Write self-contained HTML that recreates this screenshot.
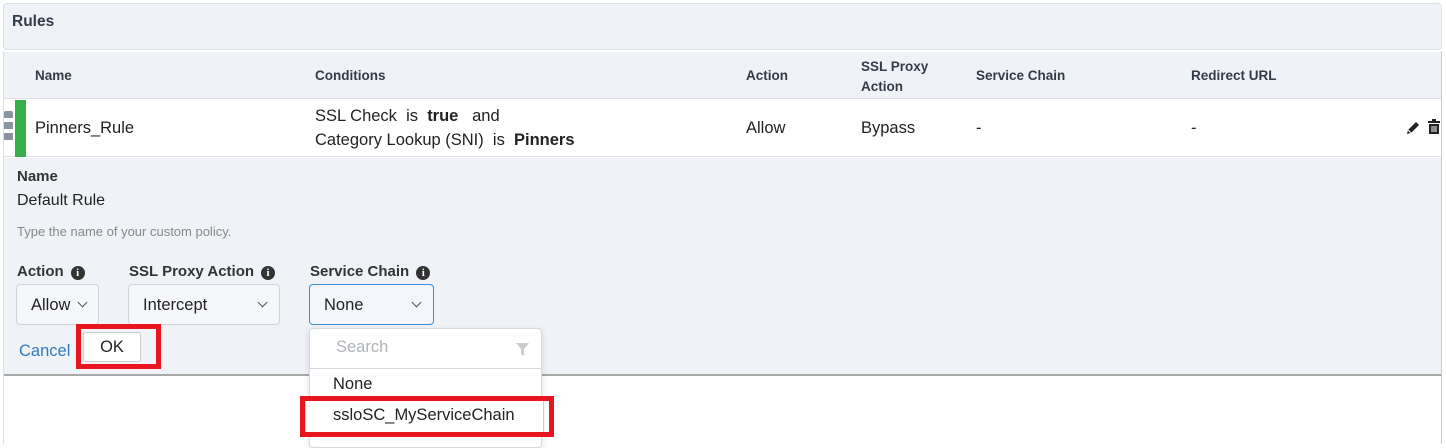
<!DOCTYPE html>
<html><head><style>
*{margin:0;padding:0;box-sizing:border-box}
body{width:1446px;height:444px;background:#fff;font-family:"Liberation Sans",Arial,sans-serif;position:relative;overflow:hidden;color:#222}
.a{position:absolute;white-space:nowrap}
.h{font-size:13.5px;font-weight:bold;color:#333b48}
.t{font-size:16.5px;color:#222}
.sel{position:absolute;border:1px solid #cfd4da;border-radius:4px;background:#f5f7fa;font-size:16.5px;color:#222}
.chev{position:absolute;width:7px;height:7px;border-right:1.8px solid #555;border-bottom:1.8px solid #555;transform:rotate(45deg)}
.info{display:inline-block;width:14px;height:14px;border-radius:50%;background:#333;color:#fff;font-size:11px;text-align:center;line-height:14px;font-weight:bold;font-family:"Liberation Serif",serif;vertical-align:0px;margin-left:7px}
.lb{font-size:15px;font-weight:bold;color:#333}
</style></head><body>
<div class="a" style="left:3px;top:3px;width:1439px;height:47px;background:#eff3f8;border:1px solid #dde1e6;border-radius:4px"></div>
<div class="a h" style="left:12px;top:13px;font-size:15.5px">Rules</div>
<div class="a" style="left:3px;top:51px;width:1439px;height:393px;border-left:1px solid #dde1e6;border-right:1px solid #ccc"></div>
<div class="a" style="left:4px;top:52px;width:1437px;height:47px;background:#eff3f8;border-bottom:1px solid #dde1e6"></div>
<div class="a h" style="left:35px;top:68px">Name</div>
<div class="a h" style="left:315px;top:68px">Conditions</div>
<div class="a h" style="left:746px;top:68px">Action</div>
<div class="a h" style="left:861px;top:57px;line-height:20px">SSL Proxy<br>Action</div>
<div class="a h" style="left:976px;top:68px">Service Chain</div>
<div class="a h" style="left:1191px;top:68px">Redirect URL</div>
<div class="a" style="left:4px;top:100px;width:1437px;height:57px;background:#fff;border-bottom:1px solid #dde1e6"></div>
<div class="a" style="left:4px;top:111px;width:9px;height:30px;background:repeating-linear-gradient(#8a93a0 0 7px,transparent 7px 11px);border-radius:2px"></div>
<div class="a" style="left:15px;top:100px;width:11px;height:57px;background:#36b04a"></div>
<div class="a t" style="left:35px;top:119px">Pinners_Rule</div>
<div class="a t" style="left:315px;top:107px">SSL Check &nbsp;is &nbsp;<b>true</b> &nbsp;&nbsp;and</div>
<div class="a t" style="left:315px;top:131px">Category Lookup (SNI) &nbsp;is &nbsp;<b>Pinners</b></div>
<div class="a t" style="left:746px;top:119px">Allow</div>
<div class="a t" style="left:861px;top:119px">Bypass</div>
<div class="a t" style="left:976px;top:119px">-</div>
<div class="a t" style="left:1191px;top:119px">-</div>
<svg class="a" style="left:1405px;top:120px" width="16" height="16" viewBox="0 0 16 16"><path d="M2 14 L3 10 L11 2 L14 5 L6 13 Z" fill="#222"/><path d="M3 10 L6 13" stroke="#fff" stroke-width="1"/></svg>
<svg class="a" style="left:1427px;top:119px" width="14" height="16" viewBox="0 0 14 16"><rect x="1" y="2" width="12" height="2" fill="#222"/><rect x="5" y="0" width="4" height="2" fill="#222"/><path d="M2 5h10v10H2z" fill="#222"/><path d="M5 7v6M7 7v6M9 7v6" stroke="#fff" stroke-width="1"/></svg>
<div class="a" style="left:4px;top:158px;width:1437px;height:218px;background:#eff3f8;border-bottom:2px solid #a8a8a8"></div>
<div class="a lb" style="left:17px;top:168px">Name</div>
<div class="a t" style="left:17px;top:192px;font-size:16px">Default Rule</div>
<div class="a" style="left:17px;top:224px;font-size:13px;color:#888">Type the name of your custom policy.</div>
<div class="a lb" style="left:17px;top:263px">Action<span class="info">i</span></div>
<div class="a lb" style="left:129px;top:263px">SSL Proxy Action<span class="info">i</span></div>
<div class="a lb" style="left:310px;top:263px">Service Chain<span class="info">i</span></div>
<div class="sel" style="left:16px;top:284px;width:83px;height:41px"><span class="a" style="left:14px;top:11px">Allow</span><span class="chev" style="left:62px;top:14px"></span></div>
<div class="sel" style="left:128px;top:284px;width:152px;height:41px"><span class="a" style="left:14px;top:11px">Intercept</span><span class="chev" style="left:130px;top:14px"></span></div>
<div class="sel" style="left:309px;top:284px;width:125px;height:41px;border-color:#3a8fd8;background:#f3f6fa"><span class="a" style="left:14px;top:11px">None</span><span class="chev" style="left:103px;top:14px"></span></div>
<div class="a" style="left:19px;top:342px;font-size:16.5px;color:#2f7bc0">Cancel</div>
<div class="a" style="left:76px;top:324px;width:85px;height:45px;border:5px solid #e8141f"></div>
<div class="a" style="left:83px;top:332px;width:58px;height:30px;background:#fff;border:1px solid #ccc;border-radius:3px;font-size:16.5px;text-align:center;line-height:28px">OK</div>
<div class="a" style="left:309px;top:328px;width:233px;height:120px;background:#fff;border:1px solid #d6d9dd;border-radius:4px;box-shadow:0 3px 8px rgba(0,0,0,.12)"></div>
<div class="a" style="left:310px;top:368px;width:231px;height:1px;background:#d6d9dd"></div>
<div class="a" style="left:336px;top:338px;font-size:16.5px;color:#b0b4b8">Search</div>
<svg class="a" style="left:516px;top:343px" width="13" height="13" viewBox="0 0 13 13"><path d="M0 0h13L8 6v7L5 11V6Z" fill="#ccc"/></svg>
<div class="a t" style="left:333px;top:375px">None</div>
<div class="a" style="left:300px;top:396px;width:254px;height:41px;border:5px solid #e8141f"></div>
<div class="a" style="left:305px;top:401px;width:239px;height:31px;background:#fff;border-right:1px solid #ccc;border-left:1px solid #ccc"></div>
<div class="a t" style="left:333px;top:406px">ssloSC_MyServiceChain</div>
</body></html>
